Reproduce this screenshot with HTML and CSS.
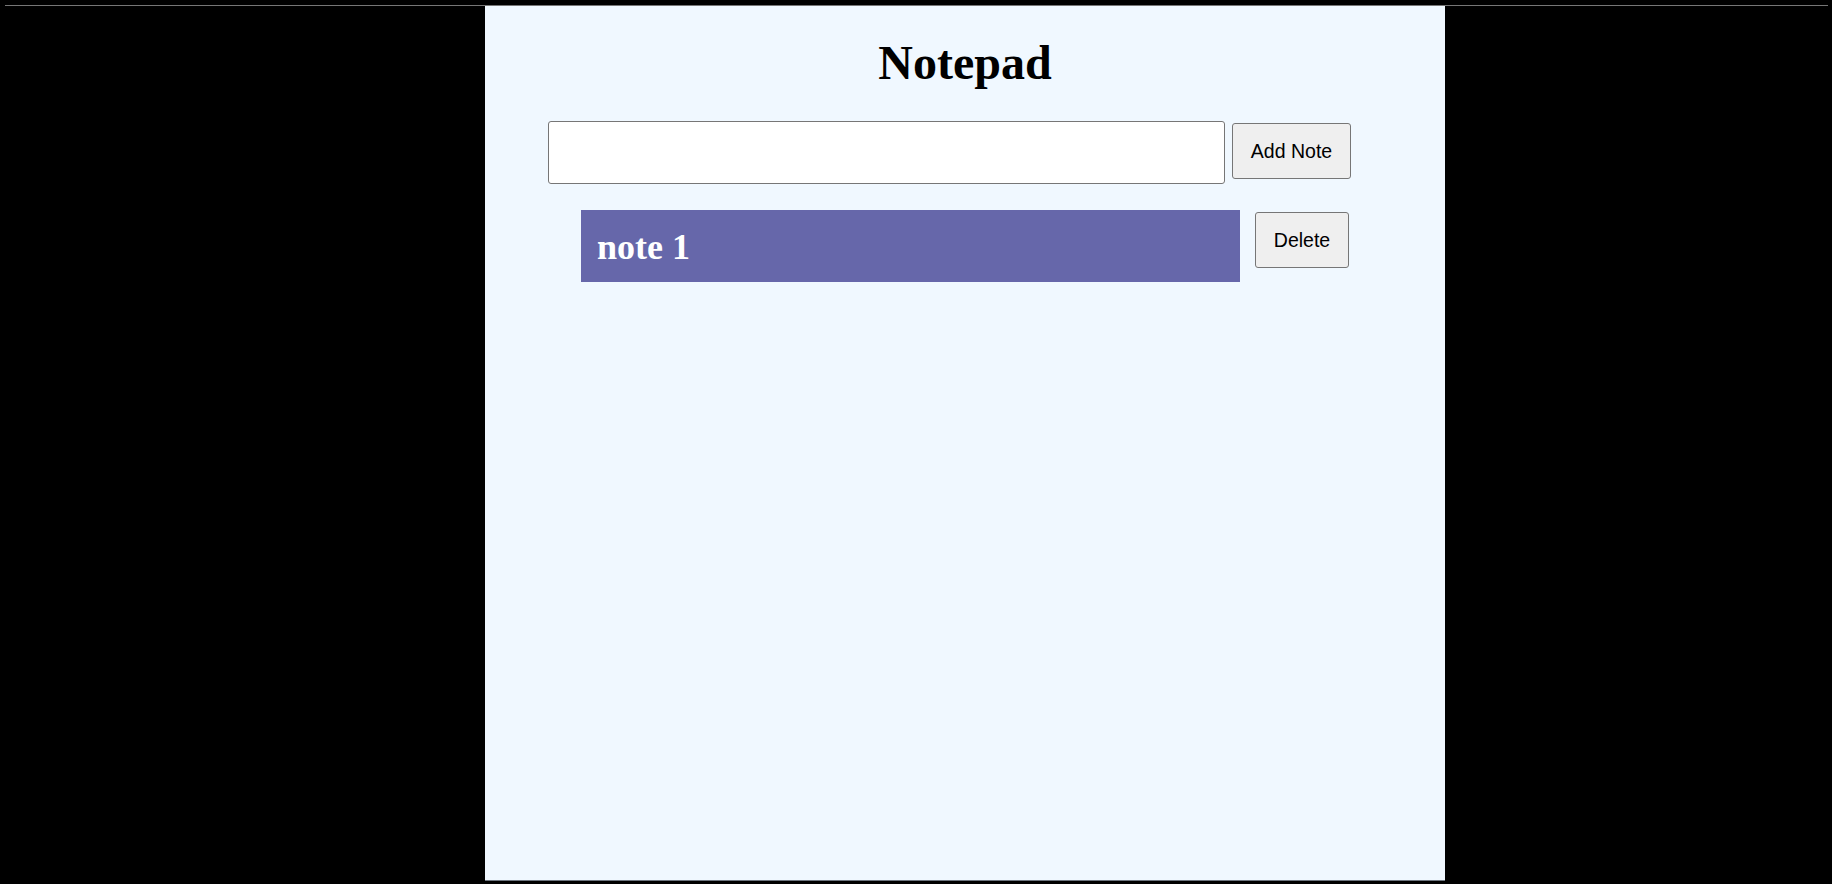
FILE: index.html
```html
<!DOCTYPE html>
<html lang="en">
<head>
<meta charset="utf-8">
<title>Notepad</title>
<link rel="stylesheet" href="styles.css">
</head>
<body>
  <div class="topline"></div>
  <main class="panel">
    <h1 class="title">Notepad</h1>
    <form class="add-row">
      <input class="note-input" type="text">
      <button class="btn btn-add" type="button">Add Note</button>
    </form>
    <ul class="notes">
      <li class="note-row">
        <div class="note-box">note 1</div>
        <button class="btn btn-delete" type="button">Delete</button>
      </li>
    </ul>
  </main>
</body>
</html>
```

FILE: styles.css
```css
html, body {
  margin: 0;
  padding: 0;
  background: #000;
}

body {
  width: 1832px;
  height: 884px;
  overflow: hidden;
  font-family: "Liberation Serif", "Times New Roman", serif;
}

.topline {
  height: 1px;
  background: #767676;
  margin: 5px 4px 0 5px;
}

.panel {
  width: 960px;
  height: 875px;
  margin-left: 485px;
  background: #f0f8ff;
  border-bottom: 1px solid #6e7680;
  padding-top: 30px;
  box-sizing: border-box;
}

.title {
  margin: 0;
  font-size: 48px;
  font-weight: bold;
  line-height: 53px;
  text-align: center;
  color: #000;
}

.add-row {
  display: flex;
  align-items: center;
  gap: 7px;
  margin: 32px 0 0 63px;
}

.note-input {
  width: 677px;
  height: 63px;
  box-sizing: border-box;
  border: 1px solid #767676;
  border-radius: 3px;
  background: #fff;
  margin: 0;
  padding: 0 8px;
  font-size: 20px;
}

.btn {
  font-family: "Liberation Sans", Arial, sans-serif;
  font-size: 19.5px;
  color: #000;
  background: #efefef;
  border: 1px solid #767676;
  border-radius: 3px;
  height: 56px;
  box-sizing: border-box;
  padding: 0 17px;
  margin: 0;
}

.btn-add {
  width: 119px;
  padding: 0;
  margin-top: -3px;
}

.btn-delete {
  width: 94px;
  padding: 0;
  margin-top: 2px;
}

.notes {
  list-style: none;
  margin: 26px 0 0 0;
  padding: 0;
}

.note-row {
  display: flex;
  align-items: flex-start;
  justify-content: center;
  gap: 15px;
}

.note-box {
  width: 659px;
  height: 72px;
  box-sizing: border-box;
  background: #6667aa;
  color: #fff;
  font-size: 36px;
  font-weight: bold;
  line-height: 40px;
  padding: 17px 16px 15px;
}
```
